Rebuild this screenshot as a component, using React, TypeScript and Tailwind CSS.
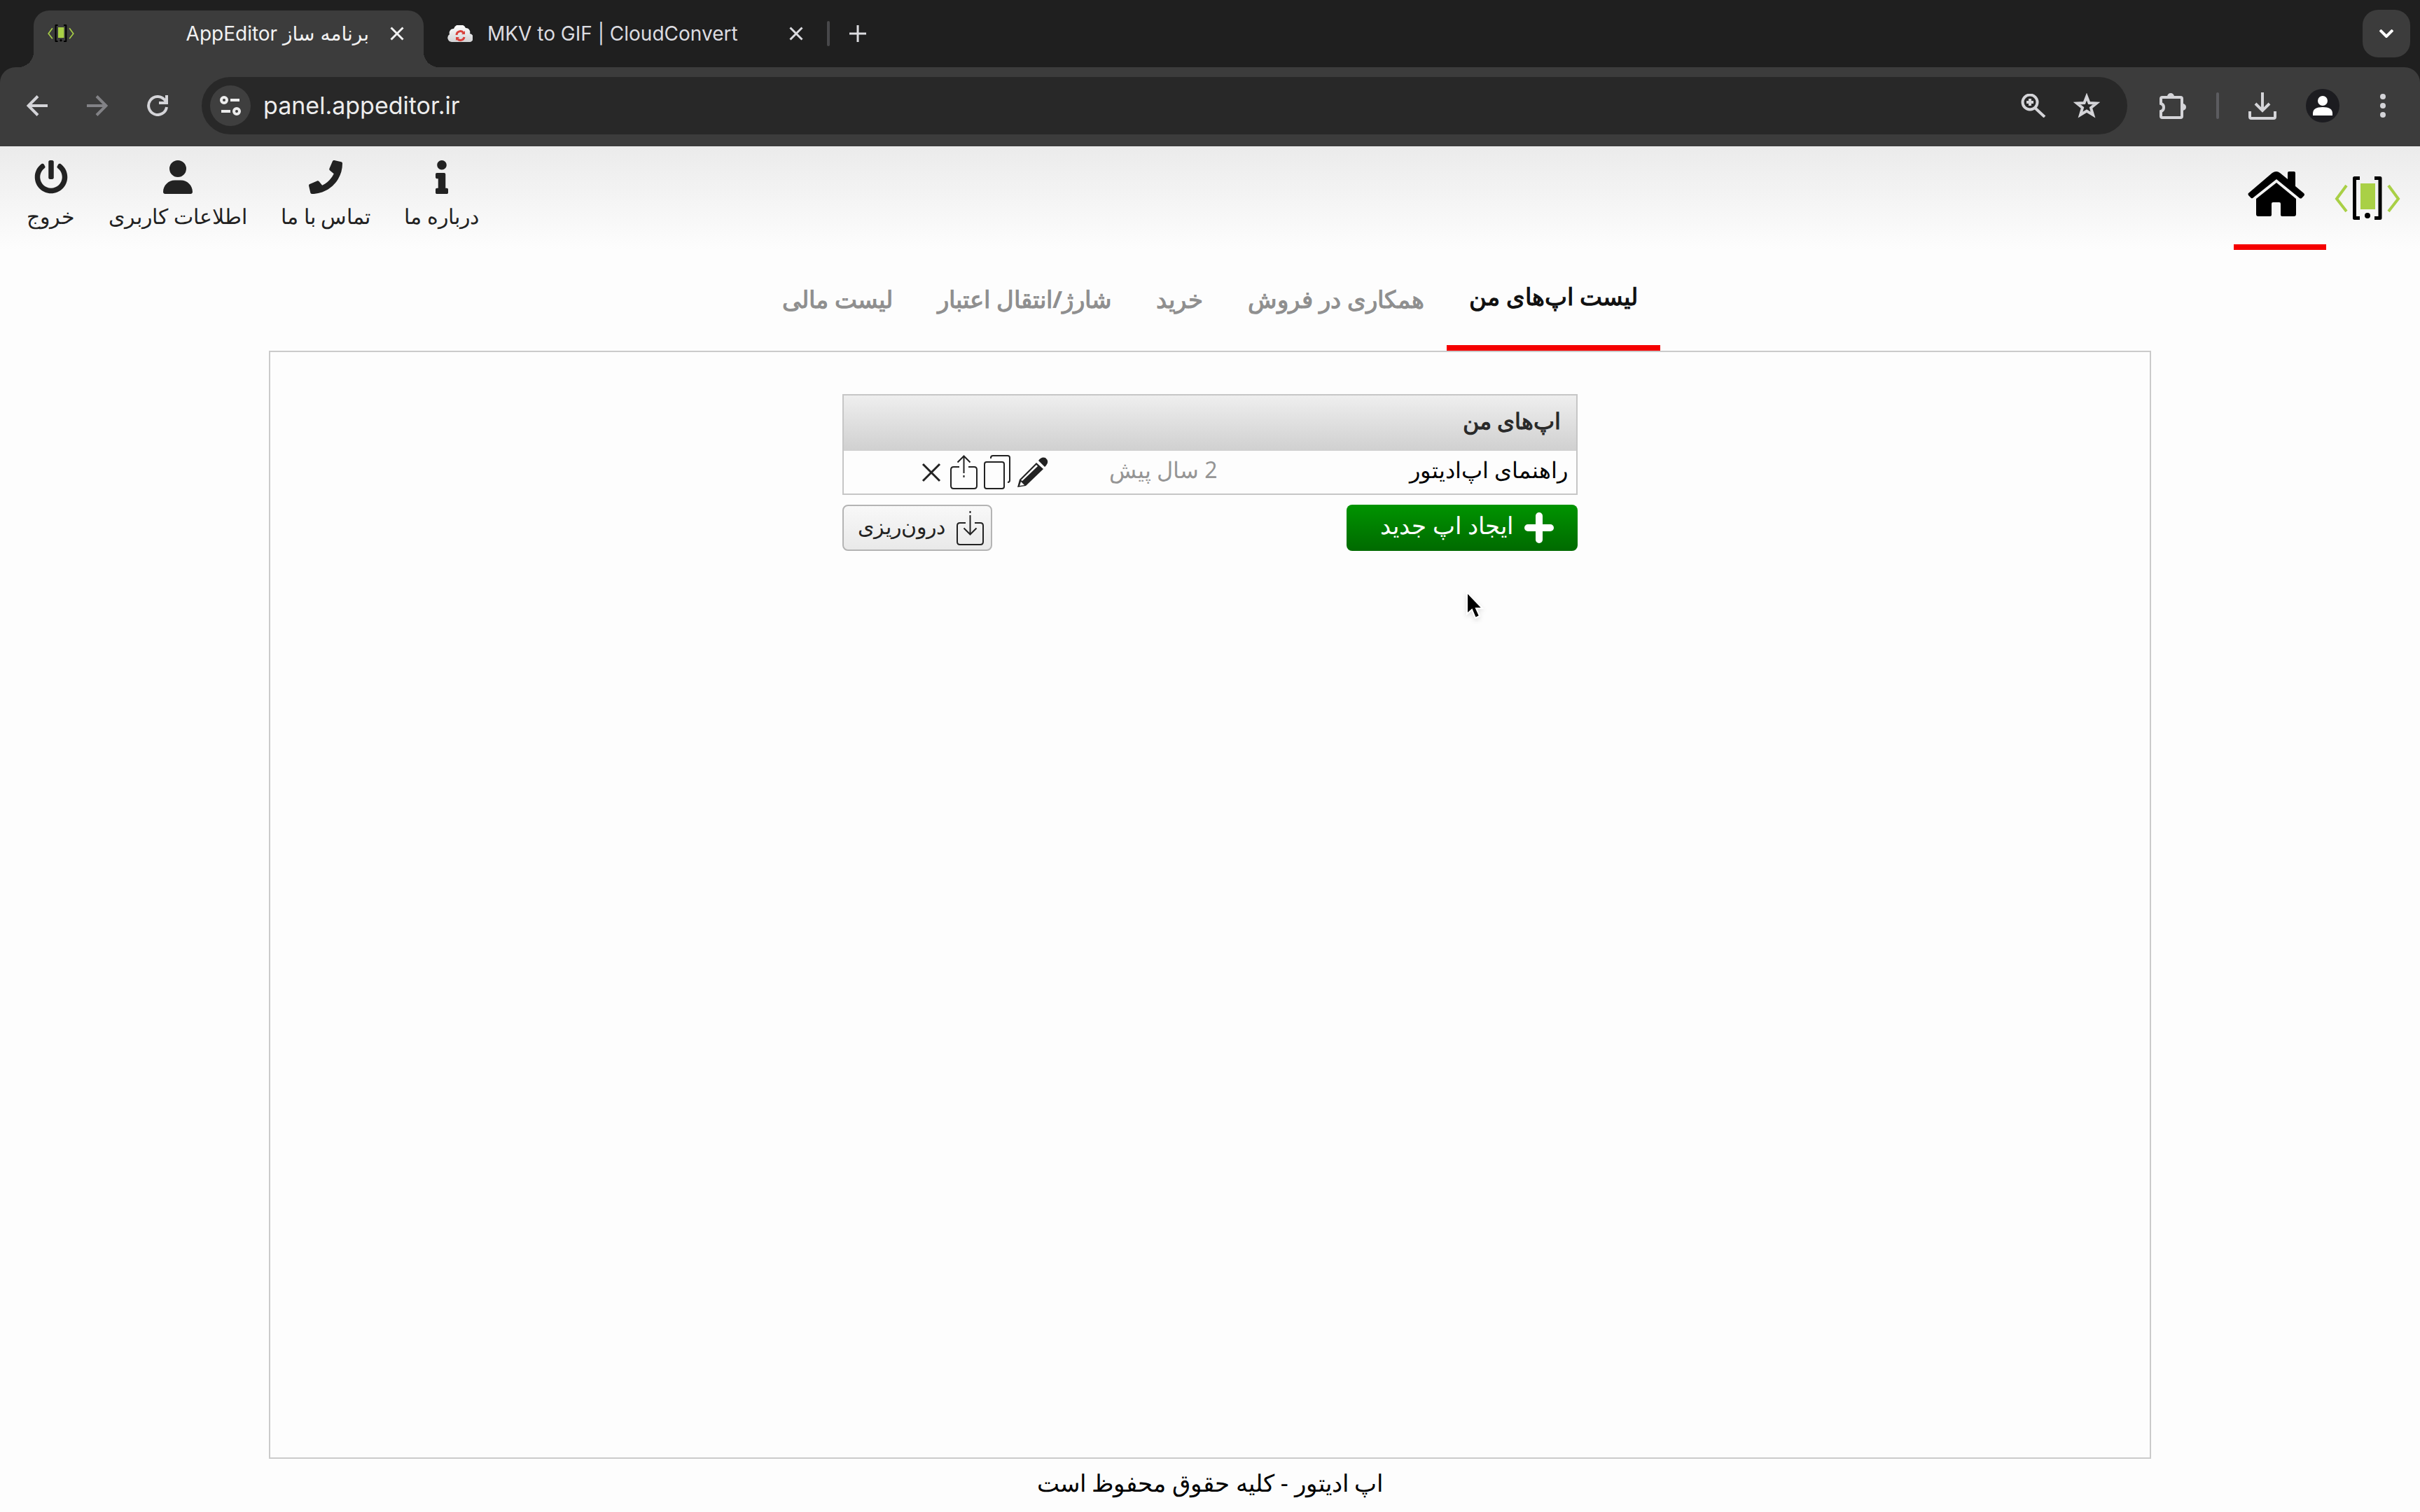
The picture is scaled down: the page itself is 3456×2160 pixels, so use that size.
import type { ReactNode } from 'react';
import { FaInfo, FaPhone, FaPowerOff } from 'react-icons/fa';
import { FaUser } from 'react-icons/fa6';

/* ---------- icons ---------- */

function BrandMark({ className }: { className: string }) {
  return (
    <svg viewBox="0 0 94 62" className={className} fill="none" aria-hidden="true">
      <path d="M17 13 3 32 17 50M77 13 91 32 77 50" stroke="#a9d046" strokeWidth="4" />
      <path d="M36 2.500H28.500V59.500H36M57 2.500H65V59.500H57" stroke="#000" strokeWidth="5" strokeLinejoin="round" />
      <rect x="37" y="10" width="21" height="37" fill="#a9d046" />
      <circle cx="47" cy="56" r="4" fill="#000" />
    </svg>
  );
}

function CloudMark() {
  return (
    <svg viewBox="0 0 36 24" className="h-6 w-9 shrink-0" aria-hidden="true">
      <defs>
        <linearGradient id="cloud" x1="0" y1="0" x2="0" y2="1">
          <stop offset="0" stopColor="#ffffff" />
          <stop offset="1" stopColor="#d2d2d4" />
        </linearGradient>
      </defs>
      <path d="M6 24A6 6 0 0 1 3 13 6 6 0 0 1 9 5 9 8 0 0 1 26 4 6 6 0 0 1 32 12 6 6 0 0 1 30 24Z" fill="url(#cloud)" />
      <path d="M13 14A5.500 5.500 0 0 1 23 11M24 17A5.500 5.500 0 0 1 14 19" fill="none" stroke="#d8413b" strokeWidth="3" />
      <path d="M20 13H25V8ZM17 17H12V22Z" fill="#d8413b" />
    </svg>
  );
}

function Line({ box, className, width = 4, children }: { box: string; className: string; width?: number; children: ReactNode }) {
  return (
    <svg viewBox={box} className={className} fill="none" stroke="currentColor" strokeWidth={width} aria-hidden="true">
      {children}
    </svg>
  );
}

const CloseGlyph = () => (
  <Line box="0 0 20 20" className="size-5" width={3}>
    <path d="M1.500 1.500 18.500 18.500M18.500 1.500 1.500 18.500" />
  </Line>
);

function HomeGlyph() {
  return (
    <svg viewBox="0 0 81 64" className="h-16 w-[81px]" fill="#000" aria-hidden="true">
      <path d="M1 31 35 2Q41-2 46 2L57 11V2Q57 0 59 0H66Q68 0 68 2V21L80 31Q82 33 80 35L77 38Q76 39 74 38L41 11 7 38Q5 39 4 37L1 34Q0 32 1 31Z" />
      <path d="M41 16 69 39V61Q69 64 66 64H49Q47 64 47 62V46Q47 44 45 44H36Q34 44 34 46V62Q34 64 32 64H15Q12 64 12 61V39Z" />
    </svg>
  );
}

function PencilGlyph() {
  return (
    <svg viewBox="0 0 44 43" className="h-[43px] w-11" aria-hidden="true">
      <path d="M27 8 37 17 12 41 0 43 3 32Z" fill="#222" />
      <path d="M27 11 29 13 7 34 5 33ZM5 35 10 40 3 41Z" fill="#fdfdfd" />
      <path d="M30 5Q34-1 40 1 46 6 41 12L39 14Z" fill="#222" />
    </svg>
  );
}

const CopyGlyph = () => (
  <Line box="0 0 39 50" className="h-[50px] w-[39px]" width={2}>
    <rect x="1" y="10" width="28" height="38" rx="3" />
    <path d="M10 5V4Q10 1 13 1H34Q37 1 37 4V36Q37 39 34 39" />
  </Line>
);

const TRAY = 'M13 17H5Q1 17 1 21V44Q1 48 5 48H34Q38 48 38 44V21Q38 17 34 17H26';

const ShareGlyph = () => (
  <Line box="0 0 39 49" className="h-[49px] w-[39px]" width={2}>
    <path d={TRAY} />
    <path d="M19.500 2V26M19.500 29V32M10.500 10.500 19.500 1.500 28.500 10.500" />
  </Line>
);

const ImportGlyph = () => (
  <Line box="0 0 39 49" className="h-[49px] w-[39px]" width={2}>
    <path d={TRAY} />
    <path d="M19.500 0V3M19.500 6V33M10.500 24.500 19.500 33.500 28.500 24.500" />
  </Line>
);

/* ---------- browser window ---------- */

function TabStrip() {
  return (
    <div className="flex h-24 items-end bg-[#1f1f1f] pr-[14px] pl-12">
      <div className="relative flex h-[81px] w-[557px] items-center rounded-t-[22px] bg-[#3c3c3c] pr-7 pb-4 pl-5 text-[#f2f2f2] before:absolute before:bottom-0 before:-left-[22px] before:size-[22px] before:bg-[radial-gradient(circle_at_0_0,transparent_22px,#3c3c3c_22px)] after:absolute after:-right-[22px] after:bottom-0 after:size-[22px] after:bg-[radial-gradient(circle_at_100%_0,transparent_22px,#3c3c3c_22px)]">
        <BrandMark className="w-[38px]" />
        <span dir="rtl" className="flex-1 text-[28px] leading-9">
          برنامه ساز AppEditor
        </span>
        <button aria-label="Close tab" className="ml-[30px]">
          <CloseGlyph />
        </button>
      </div>
      <div className="flex h-[81px] w-[542px] items-center pb-4 pl-[34px] text-[#dcdce0]">
        <CloudMark />
        <span className="ml-[21px] flex-1 text-[28px] leading-9">MKV to GIF | CloudConvert</span>
        <button aria-label="Close tab">
          <CloseGlyph />
        </button>
      </div>
      <div className="flex h-[81px] flex-1 items-center pb-4 pl-[34px] text-[#dcdce0]">
        <div className="h-9 w-1 rounded-full bg-[#48484a]" />
        <button aria-label="New tab" className="ml-7">
          <Line box="0 0 24 24" className="size-6" width={3}>
            <path d="M12 0V24M0 12H24" />
          </Line>
        </button>
        <button aria-label="Search tabs" className="ml-auto flex size-[68px] items-center justify-center rounded-[22px] bg-[#3c3c3c] text-white">
          <Line box="0 0 20 12" className="h-3 w-5" width={4}>
            <path d="M1 1 10 10 19 1" />
          </Line>
        </button>
      </div>
    </div>
  );
}

function ToolButton({ label, children }: { label: string; children: ReactNode }) {
  return (
    <button aria-label={label} className="flex h-[82px] w-[86px] items-center justify-center">
      {children}
    </button>
  );
}

function Toolbar() {
  return (
    <div className="bg-[#1f1f1f]">
      <div className="flex h-[113px] items-start rounded-t-[22px] bg-[#3c3c3c] px-[10px] pt-[14px] text-[#d4d4d8]">
        <ToolButton label="Back">
          <Line box="0 0 30 30" className="size-[30px]">
            <path d="M30 15H3M16 1.500 2.500 15 16 28.500" />
          </Line>
        </ToolButton>
        <ToolButton label="Forward">
          <Line box="0 0 30 30" className="size-[30px] text-[#828286]">
            <path d="M0 15H27M14 1.500 27.500 15 14 28.500" />
          </Line>
        </ToolButton>
        <ToolButton label="Reload">
          <Line box="0 0 30 30" className="size-[30px]">
            <path d="M28 17A13 13 0 1 1 25 6.500L28 10M28 0V11H17" />
          </Line>
        </ToolButton>
        <div className="mr-[22px] ml-5 flex h-[82px] flex-1 items-center rounded-full bg-[#282828] pr-5 pl-3">
          <button aria-label="Site information" className="flex size-[58px] items-center justify-center rounded-full bg-[#3f3f3f] text-[#ececec]">
            <Line box="0 0 30 28" className="h-7 w-[30px]">
              <circle cx="6" cy="6" r="4" />
              <circle cx="24" cy="22" r="4" />
              <path d="M15 6H28M2 22H15" />
            </Line>
          </button>
          <input
            aria-label="Address"
            defaultValue="panel.appeditor.ir"
            className="ml-[18px] min-w-0 flex-1 bg-transparent text-[34px] leading-10 text-[#ededed] outline-none"
          />
          <button aria-label="Zoom" className="flex w-[76px] justify-center">
            <Line box="0 0 36 34" className="h-[34px] w-9">
              <circle cx="13" cy="12" r="10.500" />
              <path d="M20 20 34 33M13 7V17M8 12H18" />
            </Line>
          </button>
          <button aria-label="Bookmark" className="flex w-[76px] justify-center">
            <Line box="0 0 38 36" className="h-9 w-[38px]">
              <path d="M19 5 22.500 14 33 14.500 25 21 28 31 19 25.500 10 31 13 21 5 14.500 15.500 14Z" />
            </Line>
          </button>
        </div>
        <ToolButton label="Extensions">
          <Line box="0 0 40 40" className="size-10">
            <path d="M5 8H31Q33 8 33 10V35Q33 37 31 37H5Q3 37 3 35V28Q7 27 7 22.500 7 18 3 17V10Q3 8 5 8Z" />
            <path d="M13 7A4 4 0 0 1 21 7ZM34 18A4 4 0 0 1 34 26Z" fill="currentColor" strokeWidth="2" />
          </Line>
        </ToolButton>
        <div className="mx-[19px] mt-[22px] h-[38px] w-1 rounded-full bg-[#5c5c60]" />
        <ToolButton label="Downloads">
          <Line box="0 0 40 40" className="size-10">
            <path d="M20 1V27M10 17 20 27 30 17M2 28V36Q2 38 4 38H36Q38 38 38 36V28" />
          </Line>
        </ToolButton>
        <ToolButton label="Profile">
          <svg viewBox="0 0 48 48" className="size-12" aria-hidden="true">
            <circle cx="24" cy="24" r="24" fill="#1c1c20" />
            <circle cx="24" cy="17" r="7" fill="#fff" />
            <path d="M10 38V35Q10 26 24 26T38 35V38Z" fill="#fff" />
          </svg>
        </ToolButton>
        <ToolButton label="Menu">
          <svg viewBox="0 0 8 34" className="h-[34px] w-2" fill="currentColor" aria-hidden="true">
            <circle cx="4" cy="4" r="4" />
            <circle cx="4" cy="17" r="4" />
            <circle cx="4" cy="30" r="4" />
          </svg>
        </ToolButton>
      </div>
    </div>
  );
}

/* ---------- page ---------- */

const ACCOUNT_LINKS = [
  { label: 'درباره ما', icon: <FaInfo className="size-12" /> },
  { label: 'تماس با ما', icon: <FaPhone className="size-12" /> },
  { label: 'اطلاعات کاربری', icon: <FaUser className="size-12" /> },
  { label: 'خروج', icon: <FaPowerOff className="size-12" /> },
];

function SiteHeader() {
  return (
    <header className="flex h-[148px] justify-between bg-linear-to-b from-[#ebebeb] to-[#fdfdfd] pr-7 pl-[38px]">
      <div className="flex gap-3">
        <a href="#" aria-label="اپ ادیتور" className="flex items-center">
          <BrandMark className="w-[94px]" />
        </a>
        <a href="#" aria-label="خانه" className="flex w-[132px] items-center justify-center border-b-8 border-[#f50000] pr-3 pb-1">
          <HomeGlyph />
        </a>
      </div>
      <nav className="flex gap-12 pt-5 text-[#222]">
        {ACCOUNT_LINKS.map(({ label, icon }) => (
          <a key={label} href="#" className="flex flex-col items-center gap-3 text-[30px] leading-10">
            {icon}
            {label}
          </a>
        ))}
      </nav>
    </header>
  );
}

const SECTIONS = ['لیست اپ‌های من', 'همکاری در فروش', 'خرید', 'شارژ/انتقال اعتبار', 'لیست مالی'];

function SectionTabs() {
  return (
    <nav className="flex h-36 justify-center text-[34px] font-bold">
      {SECTIONS.map((label, i) => (
        <a
          key={label}
          href="#"
          aria-current={i === 0 ? 'page' : undefined}
          className={
            i === 0
              ? 'flex items-center border-b-8 border-[#f50000] px-8 pb-1 text-[#111]'
              : 'flex items-center px-8 pb-1 text-[#8f8f8f]'
          }
        >
          {label}
        </a>
      ))}
    </nav>
  );
}

function AppsTable() {
  return (
    <table className="w-full table-fixed border-2 border-[#c6c6c6]">
      <colgroup>
        <col className="w-[49%]" />
        <col className="w-[23%]" />
        <col />
      </colgroup>
      <thead>
        <tr className="h-20 bg-linear-to-b from-[#efefef] to-[#d0d0d0]">
          <th colSpan={3} className="pr-[22px] pb-2 text-right text-[32px] font-bold text-[#2a2a2a]">
            اپ‌های من
          </th>
        </tr>
      </thead>
      <tbody>
        <tr className="h-[62px] text-[32px] leading-10">
          <td className="pr-3 pb-2 text-black">راهنمای اپ‌ادیتور</td>
          <td className="pb-2 text-[#959595]">2 سال پیش</td>
          <td>
            <div className="flex items-center gap-[9px] text-[#222]">
              <button aria-label="ویرایش">
                <PencilGlyph />
              </button>
              <button aria-label="کپی">
                <CopyGlyph />
              </button>
              <button aria-label="اشتراک‌گذاری">
                <ShareGlyph />
              </button>
              <button aria-label="حذف" className="mr-1">
                <Line box="0 0 28 28" className="size-7" width={3}>
                  <path d="M2 2 26 26M26 2 2 26" />
                </Line>
              </button>
            </div>
          </td>
        </tr>
      </tbody>
    </table>
  );
}

function Pointer() {
  return (
    <svg viewBox="0 0 30 44" className="absolute top-[281px] left-[890px] h-11 w-[30px] drop-shadow-md" aria-hidden="true">
      <path d="M2 2V33L9 27 14 39 20 36 15 25H24Z" fill="#000" stroke="#fff" strokeWidth="2" />
    </svg>
  );
}

export default function App() {
  return (
    <div className="flex min-h-screen flex-col bg-[#fdfdfd]">
      <div className="font-[Inter,'DejaVu_Sans',sans-serif]">
        <TabStrip />
        <Toolbar />
      </div>
      <div dir="rtl" className="flex flex-1 flex-col font-['Noto_Sans',sans-serif]">
        <SiteHeader />
        <SectionTabs />
        <main className="mx-auto flex w-7/9 flex-1 flex-col items-center border-2 border-[#cbcbcb] pt-[60px]">
          <div className="relative w-[1050px]">
            <AppsTable />
            <div className="mt-[14px] flex justify-between text-[#222]">
              <button className="flex h-[66px] w-[330px] items-center gap-4 rounded-lg bg-linear-to-b from-[#009400] to-[#006a00] pr-[34px] text-[34px] leading-10 text-white">
                <Line box="0 0 42 44" className="h-11 w-[42px]" width={10}>
                  <path d="M21 5V39M5 22H37" strokeLinecap="round" />
                </Line>
                <span className="pb-2">ایجاد اپ جدید</span>
              </button>
              <button className="flex h-[66px] items-center gap-4 rounded-lg border-2 border-[#b4b4b4] bg-linear-to-b from-[#f8f8f8] to-[#e9e9e9] pr-[10px] pl-5 text-[30px] leading-10">
                <ImportGlyph />
                <span className="pb-1">درون‌ریزی</span>
              </button>
            </div>
            <Pointer />
          </div>
        </main>
        <footer className="h-[76px] pt-[10px] text-center text-[34px] leading-[48px] text-black">
          اپ ادیتور - کلیه حقوق محفوظ است
        </footer>
      </div>
    </div>
  );
}
